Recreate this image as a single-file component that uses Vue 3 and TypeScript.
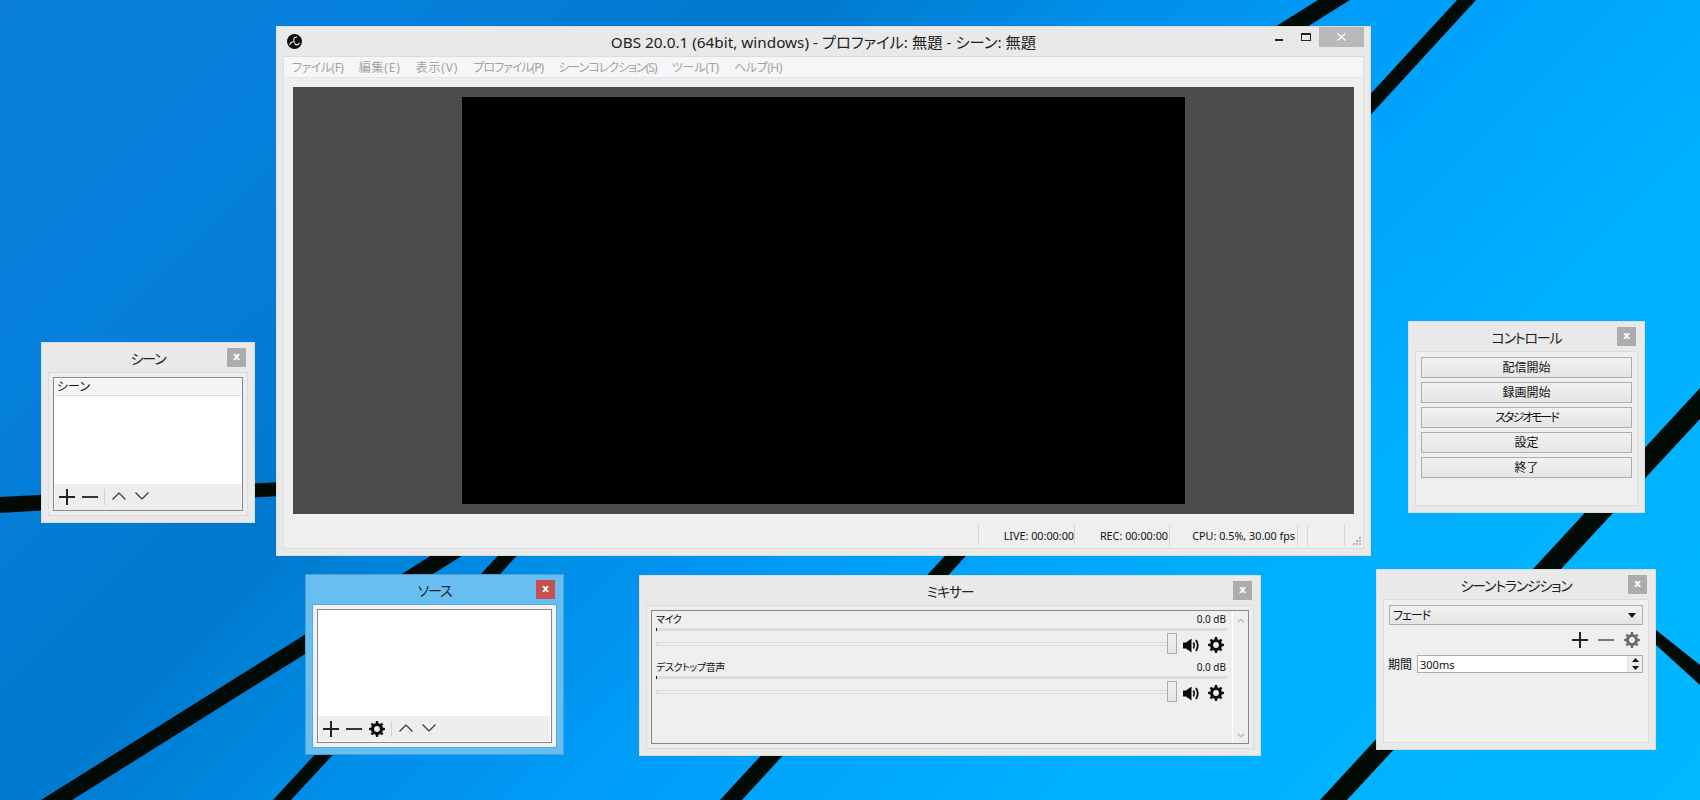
<script setup lang="ts">
function gear(r1: number, r2: number, hole: number): string {
  const c = 8, teeth = 8
  const pts: string[] = []
  for (let i = 0; i < teeth; i++) {
    const a = (i / teeth) * Math.PI * 2
    const step = (Math.PI * 2) / teeth
    const seq: [number, number][] = [
      [r2, a - step * 0.3], [r1, a - step * 0.17], [r1, a + step * 0.17], [r2, a + step * 0.3],
    ]
    for (const [r, t] of seq) pts.push(`${(c + r * Math.sin(t)).toFixed(2)} ${(c - r * Math.cos(t)).toFixed(2)}`)
  }
  return `M${pts.join('L')}Z M${c + hole} ${c}A${hole} ${hole} 0 1 0 ${c - hole} ${c}A${hole} ${hole} 0 1 0 ${c + hole} ${c}Z`
}
const gearPath = gear(8, 6, 2.9)

const menus = [
  { t: 'ファイル(F)', c: 'k1' },
  { t: '編集(E)', c: 'k0' },
  { t: '表示(V)', c: 'k0' },
  { t: 'プロファイル(P)', c: 'k2' },
  { t: 'シーンコレクション(S)', c: 'k2' },
  { t: 'ツール(T)', c: 'k3' },
  { t: 'ヘルプ(H)', c: 'k1' },
]
const controls = [
  { t: '配信開始', c: '' },
  { t: '録画開始', c: '' },
  { t: 'スタジオモード', c: 'tight' },
  { t: '設定', c: '' },
  { t: '終了', c: '' },
]
const channels = ['マイク', 'デスクトップ音声']

const bars = [
  '41,800 1318,0 1350,0 72,800',
  '273,800 700,336 720,336 291,800',
  '720,800 1457,0 1476,0 742,800',
  '1320,800 1700,388 1700,419 1347,800',
  '1656,630 1700,665 1700,685 1656,645',
  '0,497 700,460 700,470 0,513',
]
</script>

<template>
  <div class="desk">
    <svg class="wall" width="1700" height="800" viewBox="0 0 1700 800">
      <polygon v-for="b in bars" :key="b" :points="b" fill="#030b06" />
    </svg>

    <!-- Main window -->
    <section class="win main">
      <header class="title">
        <svg class="logo" width="15" height="15" viewBox="0 0 16 16">
          <circle cx="8" cy="8" r="8" fill="#0c0c0c" />
          <g fill="none" stroke="#fff" stroke-width="1.1" stroke-linecap="round">
            <path d="M10.500 3.200C8 3 6.600 5.200 7.400 7.300" />
            <path d="M3 11.200C3.600 9 5.800 7.800 8 8.600" />
            <path d="M13 10C11.800 12 9.400 12.200 8.200 10.200" />
          </g>
        </svg>
        <span>OBS 20.0.1 (64bit, windows) - プロファイル: 無題 - シーン: 無題</span>
        <div class="caption">
          <svg class="cap-min" width="8" height="2" viewBox="0 0 8 2"><rect width="8" height="2" fill="#222" /></svg>
          <svg class="cap-max" width="10" height="8" viewBox="0 0 10 8">
            <rect x=".5" y=".5" width="9" height="7" fill="none" stroke="#222" />
            <rect width="10" height="2" fill="#222" />
          </svg>
          <div class="cap-close">
            <svg width="9" height="8" viewBox="0 0 9 8"><path d="M.5 .5L8.500 7.500M8.500 .5L.5 7.500" stroke="#fff" stroke-width="1.300" /></svg>
          </div>
        </div>
      </header>
      <div class="main-body">
        <nav class="menu"><span v-for="m in menus" :key="m.t" :class="m.c">{{ m.t }}</span></nav>
        <div class="preview"><div class="canvas"></div></div>
        <footer class="status">
          <div class="cell c-live">LIVE: 00:00:00</div>
          <div class="cell c-rec">REC: 00:00:00</div>
          <div class="cell c-cpu">CPU: 0.5%, 30.00 fps</div>
          <div class="cell c-a"></div>
          <div class="cell c-b"></div>
          <div class="cell c-grip">
            <svg width="9" height="9" viewBox="0 0 9 9" fill="#b4b4b4">
              <rect x="6" y="0" width="2" height="2" /><rect x="3" y="3" width="2" height="2" /><rect x="6" y="3" width="2" height="2" />
              <rect x="0" y="6" width="2" height="2" /><rect x="3" y="6" width="2" height="2" /><rect x="6" y="6" width="2" height="2" />
            </svg>
          </div>
        </footer>
      </div>
    </section>

    <!-- Scenes -->
    <section class="win scene">
      <header class="dock-title">シーン<span class="x">x</span></header>
      <div class="frame">
        <div class="list">
          <div class="list-head">シーン</div>
          <div class="grow"></div>
          <div class="tools">
            <svg class="ic" width="16" height="16" viewBox="0 0 16 16"><path d="M0 8H16M8 0V16" stroke="#222" stroke-width="2" /></svg>
            <svg class="ic" width="16" height="16" viewBox="0 0 16 16"><path d="M0 8H16" stroke="#333" stroke-width="2" /></svg>
            <i class="sep"></i>
            <svg class="chev" width="14" height="8" viewBox="0 0 14 8"><path d="M.5 7.500L7 1L13.500 7.500" fill="none" stroke="#333" stroke-width="1.200" /></svg>
            <svg class="chev" width="14" height="8" viewBox="0 0 14 8"><path d="M.5 .5L7 7L13.500 .5" fill="none" stroke="#333" stroke-width="1.200" /></svg>
          </div>
        </div>
      </div>
    </section>

    <!-- Sources (hover) -->
    <section class="win source">
      <header class="dock-title">ソース<span class="x red">x</span></header>
      <div class="frame">
        <div class="list">
          <div class="grow"></div>
          <div class="tools">
            <svg class="ic" width="16" height="16" viewBox="0 0 16 16"><path d="M0 8H16M8 0V16" stroke="#222" stroke-width="2" /></svg>
            <svg class="ic" width="16" height="16" viewBox="0 0 16 16"><path d="M0 8H16" stroke="#333" stroke-width="2" /></svg>
            <svg class="ic" width="16" height="16" viewBox="0 0 16 16"><path :d="gearPath" fill="#0a0a0a" fill-rule="evenodd" /></svg>
            <i class="sep"></i>
            <svg class="chev" width="14" height="8" viewBox="0 0 14 8"><path d="M.5 7.500L7 1L13.500 7.500" fill="none" stroke="#333" stroke-width="1.200" /></svg>
            <svg class="chev" width="14" height="8" viewBox="0 0 14 8"><path d="M.5 .5L7 7L13.500 .5" fill="none" stroke="#333" stroke-width="1.200" /></svg>
          </div>
        </div>
      </div>
    </section>

    <!-- Mixer -->
    <section class="win mixer">
      <header class="dock-title">ミキサー<span class="x">x</span></header>
      <div class="frame">
        <div class="list mix-list">
          <div class="channels">
            <div v-for="c in channels" :key="c" class="channel">
              <div class="ch-head"><span class="ch-name">{{ c }}</span><span>0.0 dB</span></div>
              <div class="meter"><i></i></div>
              <div class="ch-row">
                <div class="slider"><div class="groove"></div><div class="handle"></div></div>
                <svg class="speaker" width="16" height="15" viewBox="0 0 16 15">
                  <path d="M0 4.500H3L8.500 .5V14.500L3 10.500H0Z" fill="#0a0a0a" />
                  <g fill="none" stroke="#0a0a0a" stroke-width="1.800">
                    <path d="M10.500 4.500Q12 7.500 10.500 10.500" />
                    <path d="M13 2Q16.500 7.500 13 13" />
                  </g>
                </svg>
                <svg class="mix-gear" width="16" height="16" viewBox="0 0 16 16"><path :d="gearPath" fill="#0a0a0a" fill-rule="evenodd" /></svg>
              </div>
            </div>
          </div>
          <div class="vscroll">
            <svg width="8" height="5" viewBox="0 0 8 5"><path d="M.7 4.300L4 1.200L7.300 4.300" fill="none" stroke="#bcbcbc" stroke-width="1.500" /></svg>
            <svg width="8" height="5" viewBox="0 0 8 5"><path d="M.7 .7L4 3.800L7.300 .7" fill="none" stroke="#bcbcbc" stroke-width="1.500" /></svg>
          </div>
        </div>
      </div>
    </section>

    <!-- Controls -->
    <section class="win control">
      <header class="dock-title">コントロール<span class="x">x</span></header>
      <div class="frame btns">
        <div v-for="b in controls" :key="b.t" class="btn" :class="b.c">{{ b.t }}</div>
      </div>
    </section>

    <!-- Transitions -->
    <section class="win trans">
      <header class="dock-title">シーントランジション<span class="x">x</span></header>
      <div class="frame trans-frame">
        <div class="combo">
          <span class="combo-text">フェード</span>
          <svg width="8" height="5" viewBox="0 0 8 5"><path d="M0 0H8L4 5Z" fill="#111" /></svg>
        </div>
        <div class="trans-tools">
          <svg width="16" height="16" viewBox="0 0 16 16"><path d="M0 8H16M8 0V16" stroke="#222" stroke-width="2" /></svg>
          <svg width="16" height="16" viewBox="0 0 16 16"><path d="M0 8H16" stroke="#777" stroke-width="2" /></svg>
          <svg width="16" height="16" viewBox="0 0 16 16"><path :d="gearPath" fill="#6c6c6c" fill-rule="evenodd" /></svg>
        </div>
        <div class="dur">
          <label>期間</label>
          <div class="spin">
            <span>300ms</span>
            <div class="spin-btns">
              <div><svg width="7" height="4" viewBox="0 0 7 4"><path d="M0 4H7L3.500 0Z" fill="#111" /></svg></div>
              <div><svg width="7" height="4" viewBox="0 0 7 4"><path d="M0 0H7L3.500 4Z" fill="#111" /></svg></div>
            </div>
          </div>
        </div>
      </div>
    </section>
  </div>
</template>

<style>
html, body { margin: 0; overflow: hidden; }
</style>

<style scoped>
.desk {
  position: relative;
  width: 1700px;
  height: 800px;
  overflow: hidden;
  background: linear-gradient(135deg, #0a80da 0%, #0580dc 15%, #0078cc 32%, #008ee8 44%, #0094f0 50%, #009cf8 54%, #00aeff 72%, #00b8ff 100%);
  font-family: "Noto Sans", "Noto Sans CJK JP", sans-serif;
  font-feature-settings: "palt";
  color: #111;
  font-size: 11px;
}
.wall { position: absolute; left: 0; top: 0; }
.win {
  position: absolute;
  box-sizing: border-box;
  display: flex;
  flex-direction: column;
  padding: 0 6px 6px;
  background: #e9e9e9;
  border: 1px solid #dcdcdc;
}
.main { left: 276px; top: 26px; width: 1095px; height: 530px; }
.scene { left: 41px; top: 342px; width: 214px; height: 181px; }
.source { left: 305px; top: 574px; width: 259px; height: 181px; background: #68bdf1; border-color: #4e9fd4; }
.mixer { left: 639px; top: 575px; width: 622px; height: 181px; }
.control { left: 1408px; top: 321px; width: 237px; height: 192px; }
.trans { left: 1376px; top: 569px; width: 280px; height: 181px; }

.title {
  position: relative;
  height: 29px;
  box-sizing: border-box;
  padding-bottom: 2px;
  flex: none;
  display: flex;
  align-items: center;
  justify-content: center;
  font-size: 15.3px;
  color: #222;
}
.logo { position: absolute; left: 4px; top: 7px; }
.caption { position: absolute; right: 0; top: 0; height: 20px; display: flex; align-items: flex-start; }
.cap-min { margin-top: 12px; }
.cap-max { margin: 6px 8px 0 18px; }
.cap-close {
  width: 45px;
  height: 20px;
  background: #b8b8b8;
  display: flex;
  align-items: center;
  justify-content: center;
}
.main-body {
  flex: 1;
  display: flex;
  flex-direction: column;
  background: #efefef;
  border: 1px solid #dcdcdc;
  min-height: 0;
}
.menu {
  height: 20px;
  flex: none;
  display: flex;
  align-items: center;
  padding-left: .4px;
  background: #f5f6f8;
  border-bottom: 1px solid #e6e6e6;
  color: #a3a3a3;
  font-size: 12px;
}
.menu span { padding: 0 7.6px; white-space: nowrap; }
.menu .k0 { letter-spacing: .8px; }
.menu .k1 { letter-spacing: -.5px; }
.menu .k2 { letter-spacing: -1px; }
.menu .k3 { letter-spacing: -.1px; }
.preview {
  margin: 9px 9px 0 9px;
  height: 427px;
  flex: none;
  background: #4c4c4c;
  display: flex;
  align-items: center;
  justify-content: center;
}
.canvas { width: 723px; height: 407px; background: #000; }
.status {
  flex: 1;
  display: flex;
  justify-content: flex-end;
  align-items: flex-start;
  padding: 11px 18px 0 0;
}
.cell {
  box-sizing: border-box;
  height: 21px;
  line-height: 21px;
  border-left: 1px solid #d6d6d6;
  text-align: right;
  white-space: nowrap;
  color: #111;
  font-size: 10.8px;
}
.c-live { width: 96px; }
.c-rec { width: 95px; padding-right: 1px; }
.c-cpu { width: 128px; padding-right: 2px; }
.c-a { width: 10px; }
.c-b { width: 37px; }
.c-grip {
  width: 0;
  position: relative;
}
.c-grip svg { position: absolute; left: 8px; top: 12px; }

.dock-title {
  position: relative;
  height: 29px;
  flex: none;
  display: flex;
  align-items: center;
  justify-content: center;
  font-size: 14px;
  letter-spacing: -1.2px;
  color: #222;
}
.x {
  position: absolute;
  right: 2px;
  top: 5px;
  width: 19px;
  height: 19px;
  background: #acacac;
  color: #fff;
  font: bold 11px/17px "DejaVu Sans", sans-serif;
  letter-spacing: 0;
  text-align: center;
}
.x.red { background: #c75050; }
.frame {
  flex: 1;
  min-height: 0;
  box-sizing: border-box;
  border: 1px solid #dcdcdc;
  padding: 4px;
  display: flex;
  flex-direction: column;
  background: #ededed;
}
.source .frame { background: #f1f1f1; border-color: #5aa7dc; }
.list {
  flex: 1;
  min-height: 0;
  display: flex;
  flex-direction: column;
  background: #fff;
  border: 1px solid #828790;
}
.list-head {
  height: 16px;
  line-height: 16px;
  margin: 1px 1px 0;
  padding-left: 2px;
  background: #f5f5f5;
  border-bottom: 1px solid #dadada;
  font-size: 12px;
  color: #111;
}
.grow { flex: 1; }
.tools {
  height: 26px;
  margin: 0 1px;
  padding-left: 4px;
  display: flex;
  align-items: center;
  background: #eee;
  flex: none;
}
.source .tools { height: 25px; margin-bottom: 1px; }
.ic { margin-right: 7px; flex: none; }
.sep { width: 1px; height: 16px; background: #d0d0d0; margin: 0 7px 0 -1px; flex: none; }
.chev { margin-right: 9px; flex: none; margin-top: -2px; }

.mix-list { flex-direction: row; background: #efefef; }
.channels { flex: 1; padding: 3px 5px 0 4px; min-width: 0; }
.channel { height: 48px; }
.ch-head {
  height: 14px;
  line-height: 11px;
  display: flex;
  justify-content: space-between;
  font-size: 10px;
  padding-right: 1px;
  color: #111;
}
.ch-name { letter-spacing: -.4px; }
.meter { height: 3px; background: #dcdcdc; position: relative; }
.meter i { position: absolute; left: 0; top: 0; width: 1px; height: 3px; background: #111; }
.ch-row { display: flex; align-items: center; margin-top: 2px; height: 21px; }
.slider { position: relative; width: 521px; height: 21px; display: flex; align-items: center; flex: none; }
.groove { width: 100%; height: 4px; box-sizing: border-box; background: #eee; border: 1px solid #d8dcdc; }
.handle {
  position: absolute;
  right: 0;
  top: 0;
  box-sizing: border-box;
  width: 10px;
  height: 21px;
  background: linear-gradient(#f0f0f0, #e4e4e4);
  border: 1px solid #adadad;
}
.speaker { margin: 3px 0 0 6px; flex: none; }
.mix-gear { margin: 3px 0 0 9px; flex: none; }
.vscroll {
  width: 16px;
  flex: none;
  box-sizing: border-box;
  border-left: 1px solid #fff;
  display: flex;
  flex-direction: column;
  align-items: center;
  justify-content: space-between;
  padding: 7px 0 5px;
}

.btns { padding: 5px; gap: 4px; background: #efefef; }
.btn {
  flex: none;
  box-sizing: border-box;
  height: 21px;
  line-height: 19px;
  text-align: center;
  font-size: 12px;
  border: 1px solid #adadad;
  background: linear-gradient(#f1f1f1, #e5e5e5);
  color: #111;
}
.btn.tight { letter-spacing: -2px; }

.trans-frame { padding: 5px; background: #efefef; }
.combo {
  box-sizing: border-box;
  height: 20px;
  flex: none;
  display: flex;
  align-items: center;
  justify-content: space-between;
  padding: 0 6px 0 3px;
  border: 1px solid #adadad;
  background: linear-gradient(#f1f1f1, #e5e5e5);
  font-size: 12px;
}
.combo-text { letter-spacing: -1px; }
.trans-tools {
  display: flex;
  justify-content: flex-end;
  gap: 10px;
  margin: 7px 3px 0 0;
  height: 16px;
  flex: none;
}
.dur { display: flex; align-items: center; margin-top: 7px; height: 18px; flex: none; }
.dur label { margin-left: -1px; width: 29px; font-size: 12px; flex: none; color: #111; }
.spin {
  flex: 1;
  height: 18px;
  box-sizing: border-box;
  display: flex;
  align-items: center;
  justify-content: space-between;
  padding-left: 2px;
  background: #fff;
  border: 1px solid #adadad;
  font-size: 11px;
}
.spin-btns {
  width: 14px;
  height: 16px;
  display: flex;
  flex-direction: column;
  background: #eee;
  border-left: 1px solid #e0e0e0;
}
.spin-btns div { flex: 1; display: flex; align-items: center; justify-content: center; }
</style>
